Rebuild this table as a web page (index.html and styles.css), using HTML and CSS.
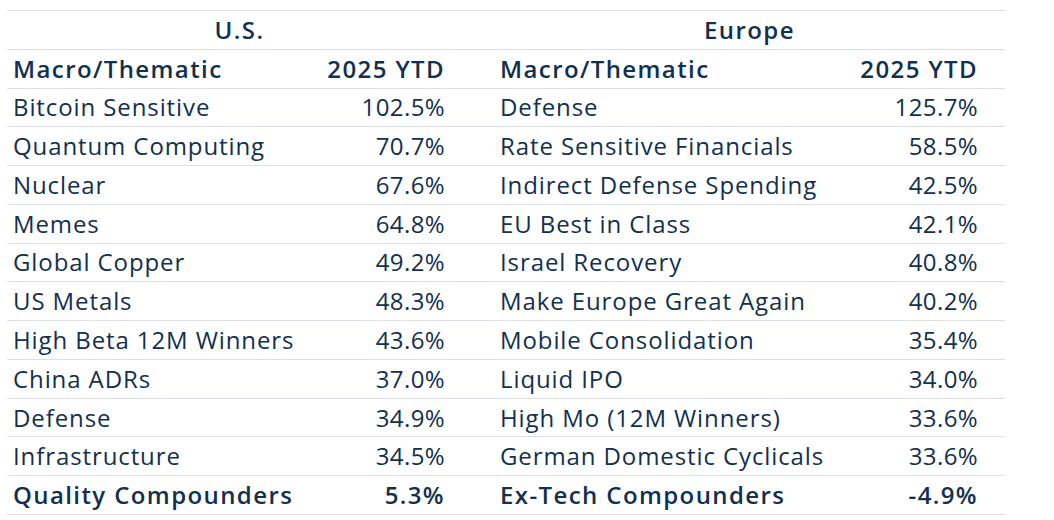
FILE: index.html
```html
<!DOCTYPE html>
<html>
<head>
<meta charset="utf-8">
<link rel="stylesheet" href="styles.css">
</head>
<body>
<div class="board">
  <div class="cell title span2">U.S.</div>
  <div class="cell gap"></div>
  <div class="cell title span2">Europe</div>

  <div class="cell name head">Macro/Thematic</div>
  <div class="cell val head">2025 YTD</div>
  <div class="cell gap"></div>
  <div class="cell name head">Macro/Thematic</div>
  <div class="cell val head">2025 YTD</div>

  <div class="cell name">Bitcoin Sensitive</div><div class="cell val">102.5%</div><div class="cell gap"></div><div class="cell name">Defense</div><div class="cell val">125.7%</div>
  <div class="cell name">Quantum Computing</div><div class="cell val">70.7%</div><div class="cell gap"></div><div class="cell name">Rate Sensitive Financials</div><div class="cell val">58.5%</div>
  <div class="cell name">Nuclear</div><div class="cell val">67.6%</div><div class="cell gap"></div><div class="cell name">Indirect Defense Spending</div><div class="cell val">42.5%</div>
  <div class="cell name">Memes</div><div class="cell val">64.8%</div><div class="cell gap"></div><div class="cell name">EU Best in Class</div><div class="cell val">42.1%</div>
  <div class="cell name">Global Copper</div><div class="cell val">49.2%</div><div class="cell gap"></div><div class="cell name">Israel Recovery</div><div class="cell val">40.8%</div>
  <div class="cell name">US Metals</div><div class="cell val">48.3%</div><div class="cell gap"></div><div class="cell name">Make Europe Great Again</div><div class="cell val">40.2%</div>
  <div class="cell name">High Beta 12M Winners</div><div class="cell val">43.6%</div><div class="cell gap"></div><div class="cell name">Mobile Consolidation</div><div class="cell val">35.4%</div>
  <div class="cell name">China ADRs</div><div class="cell val">37.0%</div><div class="cell gap"></div><div class="cell name">Liquid IPO</div><div class="cell val">34.0%</div>
  <div class="cell name">Defense</div><div class="cell val">34.9%</div><div class="cell gap"></div><div class="cell name">High Mo (12M Winners)</div><div class="cell val">33.6%</div>
  <div class="cell name">Infrastructure</div><div class="cell val">34.5%</div><div class="cell gap"></div><div class="cell name">German Domestic Cyclicals</div><div class="cell val">33.6%</div>

  <div class="cell name strong">Quality Compounders</div><div class="cell val strong">5.3%</div><div class="cell gap"></div><div class="cell name strong">Ex-Tech Compounders</div><div class="cell val strong">-4.9%</div>
</div>
</body>
</html>
```

FILE: styles.css
```css
html, body {
  margin: 0;
  padding: 0;
  background: #ffffff;
}

body {
  font-family: "Open Sans", "Liberation Sans", sans-serif;
  color: #12304f;
}

.board {
  margin: 10px 0 0 7px;
  width: 998px;
  display: grid;
  grid-template-columns: 290px 175px 22px 350px 161px;
  grid-auto-rows: 38.77px;
  border-top: 1px solid #dcdfe3;
}

.cell {
  box-sizing: border-box;
  border-bottom: 1px solid #dcdfe3;
  display: flex;
  align-items: center;
  font-size: 24px;
  line-height: 1;
  white-space: nowrap;
  letter-spacing: 0.9px;
}

.span2 {
  grid-column: span 2;
}

.title {
  justify-content: center;
  font-weight: 600;
  letter-spacing: 1.4px;
}

.name {
  padding-left: 6px;
}

.val {
  justify-content: flex-end;
  padding-right: 27px;
  letter-spacing: 0.4px;
}

.head,
.strong {
  font-weight: 600;
  letter-spacing: 1.4px;
}
```
